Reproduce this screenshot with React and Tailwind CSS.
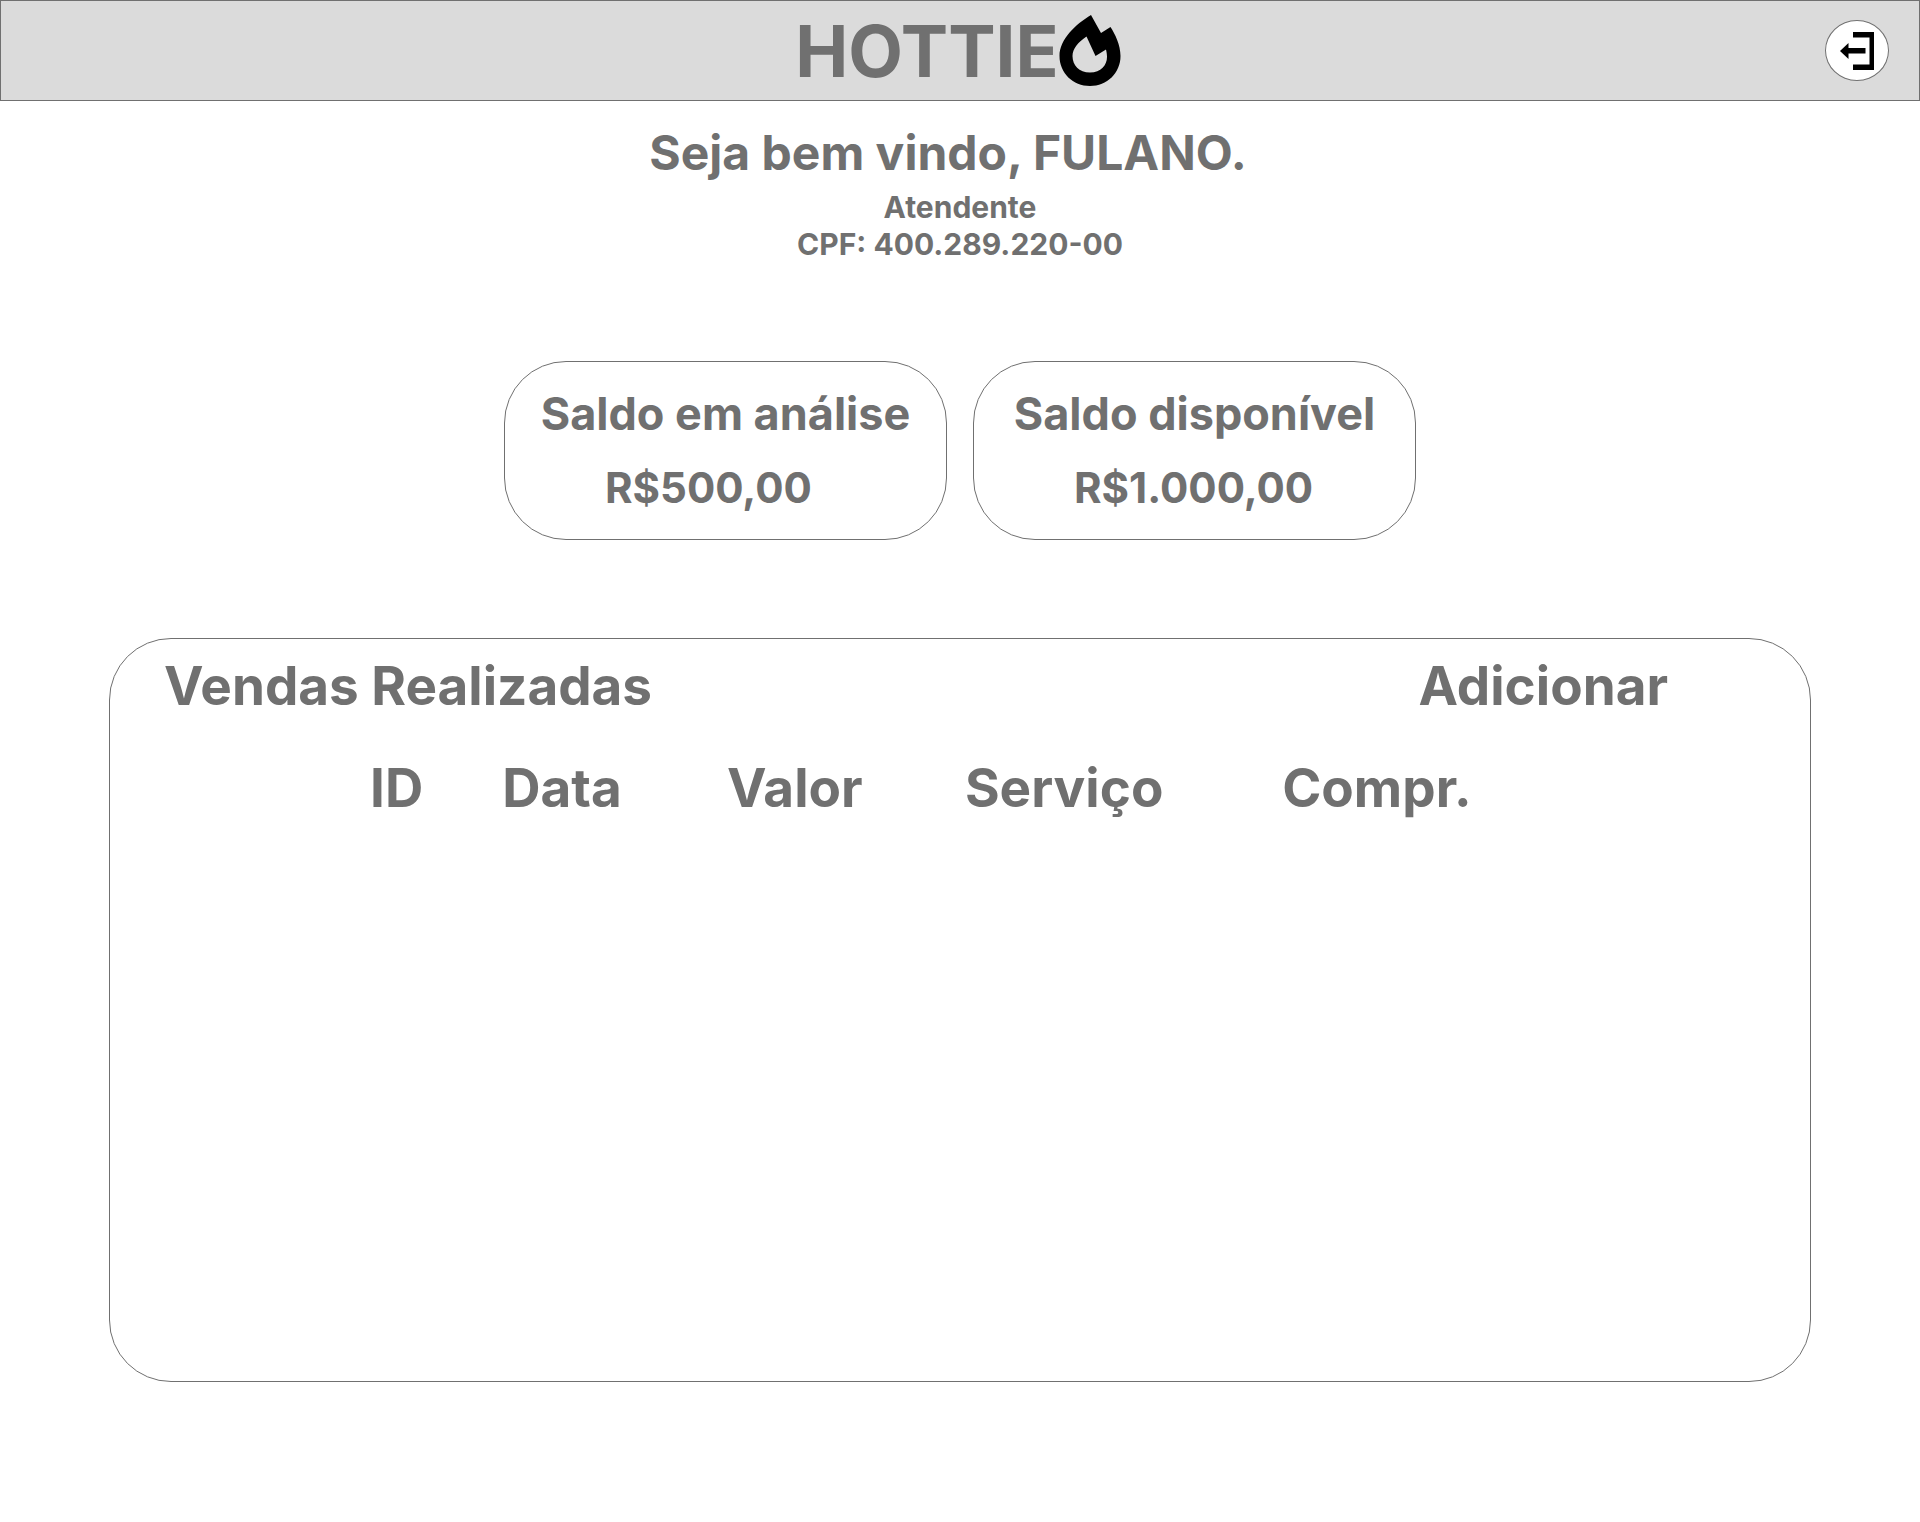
const balances = [
  { label: "Saldo em análise", value: "R$500,00" },
  { label: "Saldo disponível", value: "R$1.000,00" },
];

function FlameIcon() {
  return (
    <svg viewBox="0 0 62 72" className="h-[72px] w-[62px]" aria-hidden="true">
      <path
        fillRule="evenodd"
        fill="#000"
        d="M32 0 L42 18 L51.500 12 C56 19 61.500 30 61.500 41 C61.500 58 48 71 31 71 C14 71 0.500 58 0.500 41 C0.500 24 17 9 32 0 Z M27.500 21.500 C19 27 13.500 34 13.500 41 C13.500 50 20 57.500 31 57.500 C42 57.500 48 50 48 42 C48 39 47.500 37 47 34.500 L36.500 41 Z"
      />
    </svg>
  );
}

function ExitIcon() {
  return (
    <svg viewBox="0 0 34 38" className="h-[38px] w-[34px]" aria-hidden="true">
      <path fill="#000" d="M13 0H34V38H13V32.500H29.500V5.500H13Z M0 19L8.500 11V16H25.500V21.500H8.500V27Z" />
    </svg>
  );
}

export default function App() {
  return (
    <div className="min-h-screen bg-white pb-[140px] font-['Inter',sans-serif] font-bold text-[#707070]">
      <header className="grid h-[101px] grid-cols-[1fr_auto_1fr] items-center border border-[#707070] bg-[#dbdbdb] px-[30px]">
        <a href="#" aria-label="Hottie" className="col-start-2 flex items-center pr-1">
          <span className="text-[71px] leading-[80px]">HOTTIE</span>
          <FlameIcon />
        </a>
        <button
          type="button"
          aria-label="Sair"
          className="flex h-[61px] w-[64px] items-center justify-center justify-self-end rounded-[50%] border border-[#707070] bg-white"
        >
          <ExitIcon />
        </button>
      </header>

      <main className="pt-6">
        <div className="text-center">
          <h1 className="pr-6 text-[48px] leading-[56px]">Seja bem vindo, FULANO.</h1>
          <p className="mt-2 text-[30px] leading-[37px]">Atendente</p>
          <p className="text-[30px] leading-[37px]">CPF: 400.289.220-00</p>
        </div>

        <section aria-label="Saldos" className="mt-[98px] flex flex-wrap justify-center gap-[26px]">
          {balances.map((b) => (
            <div key={b.label} className="w-[443px] rounded-[62px] border border-[#707070] pt-6 pb-[23px]">
              <h2 className="text-center text-[45px] leading-[56px]">{b.label}</h2>
              <p className="mt-[18px] pl-[100px] text-[42px] leading-[56px]">{b.value}</p>
            </div>
          ))}
        </section>

        <section className="mx-[109px] mt-[98px] min-h-[744px] rounded-[62px] border border-[#707070] pt-[15px]">
          <div className="flex justify-between pr-[142px] pl-[54px]">
            <h2 className="text-[53px] leading-[64px]">Vendas Realizadas</h2>
            <button type="button" className="text-[53px] leading-[64px]">
              Adicionar
            </button>
          </div>
          <div className="mt-[38px] pr-[118px] pl-[260px]">
            <table className="w-full table-fixed text-left text-[53px] leading-[64px]">
              <thead>
                <tr>
                  <th scope="col" className="w-[10%]">ID</th>
                  <th scope="col" className="w-[17%]">Data</th>
                  <th scope="col" className="w-[18%]">Valor</th>
                  <th scope="col" className="w-[24%]">Serviço</th>
                  <th scope="col" className="w-[31%]">Compr.</th>
                </tr>
              </thead>
              <tbody />
            </table>
          </div>
        </section>
      </main>
    </div>
  );
}
